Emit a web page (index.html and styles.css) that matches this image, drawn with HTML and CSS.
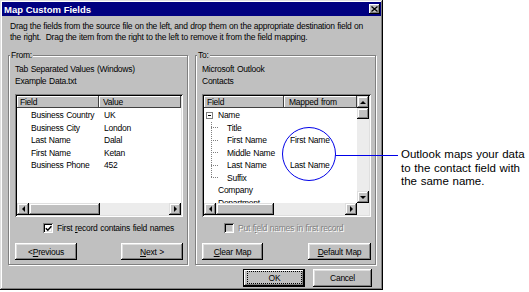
FILE: index.html
```html
<!DOCTYPE html>
<html lang="en">
<head>
  <meta charset="UTF-8">
  <meta name="viewport" content="width=device-width,initial-scale=1.0">
  <title>Map Custom Fields</title>
  <link rel="stylesheet" href="styles.css">
</head>
<body>
  <div class="page">
    <div class="dialog">
      <!-- title bar -->
      <div class="titlebar">
        <span class="title">Map Custom Fields</span>
        <span class="close">
          <svg width="7" height="6" viewBox="0 0 7 6"><path d="M0.5 0.5l6 5M6.5 0.5l-6 5" stroke="#000" stroke-width="1.3" fill="none"/></svg>
        </span>
      </div>

      <p class="intro">Drag the fields from the source file on the left, and drop them on the appropriate destination field on<br>the right.&nbsp; Drag the item from the right to the left to remove it from the field mapping.</p>

      <div class="groups">
        <!-- From -->
        <div class="group from">
          <div class="group-label">From:</div>
          <div class="source">Tab Separated Values (Windows)<br>Example Data.txt</div>
          <div class="listbox">
            <div class="list-main">
              <div class="list-head"><span>Field</span><span>Value</span></div>
              <div class="list-rows">
                <div class="row"><span class="field">Business Country</span><span class="value">UK</span></div>
                <div class="row"><span class="field">Business City</span><span class="value">London</span></div>
                <div class="row"><span class="field">Last Name</span><span class="value">Dalal</span></div>
                <div class="row"><span class="field">First Name</span><span class="value">Ketan</span></div>
                <div class="row"><span class="field">Business Phone</span><span class="value">452</span></div>
              </div>
            </div>
            <div class="hscroll">
              <span class="sb-btn"><i class="arrow left"></i></span>
              <span class="sb-thumb wide"></span>
              <span class="sb-btn end"><i class="arrow right"></i></span>
            </div>
          </div>
          <div class="check">
            <span class="box">
              <svg width="7" height="7" viewBox="0 0 7 7"><path d="M0.8 3.2l2 2 3.6-4" stroke="#000" stroke-width="1.5" fill="none"/></svg>
            </span>
            <span>First <u>r</u>ecord contains field names</span>
          </div>
          <div class="btn-row">
            <button class="btn">&lt; <u>P</u>revious</button>
            <button class="btn"><u>N</u>ext &gt;</button>
          </div>
        </div>

        <!-- To -->
        <div class="group to">
          <div class="group-label">To:</div>
          <div class="source">Microsoft Outlook<br>Contacts</div>
          <div class="listbox with-v">
            <div class="list-main">
              <div class="list-head"><span>Field</span><span>Mapped from</span></div>
              <div class="list-rows">
                <div class="row"><span class="field"><i class="expander"></i>Name</span><span class="value"></span></div>
                <div class="branch">
                  <div class="row"><span class="field"><i class="stub"></i>Title</span><span class="value"></span></div>
                  <div class="row"><span class="field"><i class="stub"></i>First Name</span><span class="value">First Name</span></div>
                  <div class="row"><span class="field"><i class="stub"></i>Middle Name</span><span class="value"></span></div>
                  <div class="row"><span class="field"><i class="stub"></i>Last Name</span><span class="value">Last Name</span></div>
                  <div class="row"><span class="field"><i class="stub"></i>Suffix</span><span class="value"></span></div>
                </div>
                <div class="row"><span class="field top">Company</span><span class="value"></span></div>
                <div class="row"><span class="field top">Department</span><span class="value"></span></div>
              </div>
            </div>
            <div class="vscroll">
              <span class="sb-btn"><i class="arrow up"></i></span>
              <span class="sb-thumb"></span>
              <span class="sb-btn end"><i class="arrow down"></i></span>
            </div>
            <div class="hscroll">
              <span class="sb-btn"><i class="arrow left"></i></span>
              <span class="sb-thumb narrow"></span>
              <span class="sb-btn end"><i class="arrow right"></i></span>
            </div>
            <div class="corner"></div>
          </div>
          <div class="check disabled">
            <span class="box"></span>
            <span>Put f<u>i</u>eld names in first record</span>
          </div>
          <div class="btn-row">
            <button class="btn"><u>C</u>lear Map</button>
            <button class="btn"><u>D</u>efault Map</button>
          </div>
        </div>
      </div>

      <div class="footer">
        <button class="btn default"><span class="focus">OK</span></button>
        <button class="btn cancel">Cancel</button>
      </div>
    </div>

    <div class="callout">Outlook maps your data<br>to the contact field with<br>the same name.</div>

    <!-- annotation ring over the dialog -->
    <svg class="marker" width="122" height="60" viewBox="0 0 122 60">
      <circle cx="29" cy="29" r="26.5" fill="none" stroke="#0000e8" stroke-width="1"/>
      <line x1="55.5" y1="30.5" x2="118" y2="30.5" stroke="#0000e8" stroke-width="1"/>
    </svg>
  </div>
</body>
</html>
```

FILE: styles.css
```css
* { margin:0; padding:0; box-sizing:border-box; }
body {
  background:#fff;
  font-family:"Liberation Sans",Arial,sans-serif;
  font-size:8.5px;
  letter-spacing:-0.25px;
  word-spacing:0.6px;
  color:#000;
}
.page {
  position:relative;
  width:529px; height:292px;
  display:flex; align-items:flex-start;
}

/* dialog frame */
.dialog {
  width:383px; height:290px;
  flex:none;
  padding:2px;
  background:#c0c0c0;
  box-shadow:inset -1px -1px #000, inset 1px 1px #dfdfdf,
             inset -2px -2px #808080, inset 2px 2px #fff;
  display:flex; flex-direction:column;
}
.titlebar {
  height:14px; flex:none;
  background:#000080; color:#fff;
  display:flex; align-items:center; justify-content:space-between;
  padding:0 1px 0 2px;
}
.title { font-weight:bold; font-size:9.5px; letter-spacing:0; word-spacing:0; }
.close {
  width:11px; height:10px;
  background:#c0c0c0;
  box-shadow:inset -1px -1px #000, inset 1px 1px #fff, inset -2px -2px #808080;
  display:flex; align-items:center; justify-content:center;
}
.intro {
  margin:5px 0 0 8px;
  line-height:10.5px;
  white-space:nowrap;
  word-spacing:0.3px;
}

/* group boxes */
.groups {
  display:flex; gap:7px;
  margin:13px 0 0 6px;
}
.group {
  display:flex; flex-direction:column;
  border:1px solid #808080;
  box-shadow:inset 1px 1px #fff, 1px 1px #fff;
  padding:0 4px 4px 6px;
}
.group.from { width:180px; }
.group.to { width:181px; }
.group-label {
  width:fit-content;
  margin:-6px 0 0 -5px;
  padding:0 1px;
  line-height:10px;
  background:#c0c0c0;
}
.source {
  margin-top:3px;
  line-height:12px;
}

/* list views */
.listbox {
  margin-top:7px;
  height:123px;
  padding:2px;
  background:#fff;
  box-shadow:inset 1px 1px #808080, inset -1px -1px #fff,
             inset 2px 2px #000, inset -2px -2px #dfdfdf;
  display:grid;
  grid-template-rows:1fr 12px;
}
.listbox.with-v { grid-template-columns:1fr 12px; }
.list-main { overflow:hidden; display:flex; flex-direction:column; }
.list-head {
  height:12px; flex:none;
  display:grid; grid-template-columns:82px 1fr;
}
.list-head span {
  line-height:12px;
  padding-left:3px;
  background:#c0c0c0;
  box-shadow:inset -1px -1px #404040, inset 1px 1px #fff;
  white-space:nowrap;
}
.from .list-head span + span { padding-left:4px; }
.list-rows { padding-top:1px; }
.row {
  display:grid; grid-template-columns:82px 1fr;
  height:12.5px; line-height:12.5px;
  white-space:nowrap;
}
.from .row .field { padding-left:14px; }
.from .row .value { padding-left:5px; }

.to .list-head, .to .row { grid-template-columns:80px 1fr; }
.to .list-head span + span { padding-left:5px; }
.to .row .field { padding-left:2px; display:flex; align-items:center; }
.to .row .field.top { padding-left:14px; }
.to .row .value { padding-left:6px; }
.to .list-rows { padding-top:1px; }

/* tree bits */
.expander {
  width:7px; height:7px; flex:none;
  margin-right:5px;
  border:1px solid #808080;
  background:linear-gradient(#000,#000) no-repeat center / 3px 1px;
}
.branch {
  background:repeating-linear-gradient(#808080 0 1px, transparent 1px 2px) no-repeat 7px 0 / 1px calc(100% - 6px);
}
.stub {
  width:7px; height:0; flex:none;
  margin:0 9px 0 5px;
  border-top:1px dotted #808080;
}

/* scroll bars */
.hscroll, .vscroll {
  display:flex;
  background:#ececec;
}
.vscroll { flex-direction:column; }
.sb-btn, .sb-thumb {
  background:#c0c0c0;
  box-shadow:inset -1px -1px #000, inset 1px 1px #dfdfdf,
             inset -2px -2px #808080, inset 2px 2px #fff;
}
.sb-btn {
  width:12px; height:12px; flex:none;
  display:flex; align-items:center; justify-content:center;
}
.hscroll .sb-btn.end { margin:0 0 0 auto; }
.vscroll .sb-btn.end { margin:auto 0 0 0; }
.sb-thumb { flex:none; }
.sb-thumb.wide { width:71px; }
.sb-thumb.narrow { width:58px; }
.vscroll .sb-thumb { height:11px; }
.corner { background:#ececec; }

.arrow { width:0; height:0; border:3px solid transparent; }
.arrow.left { border-right-color:#000; border-left-width:0; }
.arrow.right { border-left-color:#000; border-right-width:0; }
.arrow.up { border-bottom-color:#000; border-top-width:0; }
.arrow.down { border-top-color:#000; border-bottom-width:0; }

/* check boxes */
.check {
  margin-top:6px;
  height:10px;
  display:flex; align-items:center; gap:4px;
  line-height:10px;
  white-space:nowrap;
}
.from .check { margin-left:28px; }
.to .check { margin-left:22px; }
.box {
  width:10px; height:10px; flex:none;
  background:#fff;
  box-shadow:inset 1px 1px #808080, inset -1px -1px #fff,
             inset 2px 2px #000, inset -2px -2px #dfdfdf;
  display:flex; align-items:center; justify-content:center;
}
.check.disabled { color:#808080; text-shadow:1px 1px #fff; }
.check.disabled .box { background:#c0c0c0; }

/* push buttons */
.btn-row {
  margin-top:10px;
  display:flex; justify-content:space-between;
}
.btn {
  width:62px; height:17px;
  font:inherit; letter-spacing:inherit; word-spacing:inherit; color:#000;
  border:0;
  background:#c0c0c0;
  box-shadow:inset -1px -1px #000, inset 1px 1px #fff,
             inset -2px -2px #808080, inset 2px 2px #dfdfdf;
  display:flex; align-items:center; justify-content:center;
}
.to .btn-row .btn:first-child { width:61px; }
.to .btn-row .btn:last-child { width:63px; }

.footer {
  margin-top:4px;
  display:flex; justify-content:flex-end; gap:8px;
  padding-right:9px;
}
.footer .btn { height:18px; }
.btn.cancel { width:59px; }
.btn.default {
  align-items:stretch;
  box-shadow:inset 0 0 0 1px #000, inset -2px -2px #000, inset 2px 2px #fff,
             inset -3px -3px #808080;
}
.focus {
  flex:1;
  margin:2px 3px 3px 4px;
  border:1px dotted #000;
  display:flex; align-items:center; justify-content:center;
}

/* note beside the dialog */
.callout {
  margin:148px 0 0 18px;
  font-size:11.5px;
  letter-spacing:0;
  word-spacing:0.5px;
  line-height:13.5px;
}
.marker {
  position:absolute; left:280px; top:125px;
  pointer-events:none;
}
```
